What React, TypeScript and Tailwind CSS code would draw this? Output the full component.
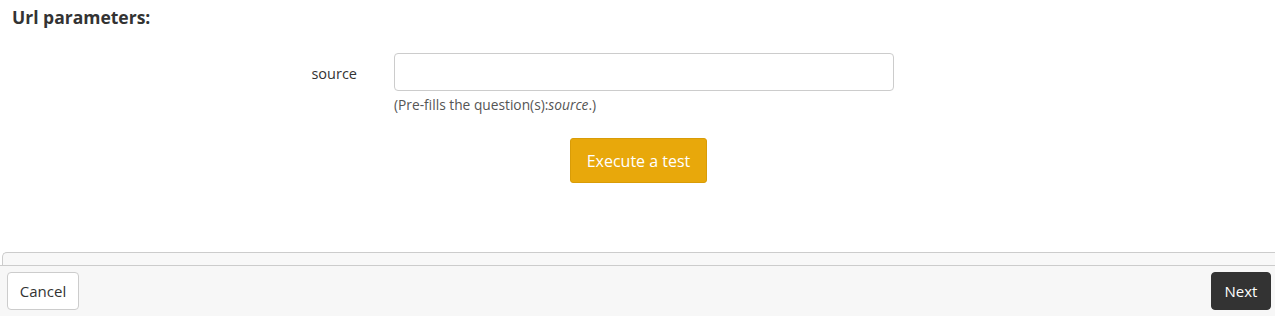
export default function App() {
    return (
        <div className="w-[1275px] h-[316px] bg-white flex flex-col text-[#333] font-['Open_Sans',sans-serif] overflow-hidden">
            <div className="flex-1 flex flex-col">
                <h3 className="px-3 pt-[5px] text-[17.5px] font-bold leading-[24px]">Url parameters:</h3>

                <div className="flex mt-[24px]">
                    <label className="w-[357px] text-right text-[14.5px] pt-[11px] leading-[20px]">source</label>
                    <div className="ml-[37px]">
                        <input
                            type="text"
                            className="block w-[500px] h-[38px] border border-[#ccc] rounded-[4px] px-3 outline-none"
                        />
                        <p className="mt-[4px] text-[13.75px] leading-[20px] text-[#555]">
                            (Pre-fills the question(s):<em>source</em>.)
                        </p>
                    </div>
                </div>

                <div className="flex justify-center mt-[23px] pl-[2px]">
                    <button className="w-[137px] h-[45px] rounded-[3px] bg-[#e8a80b] border border-[#d99c07] text-white text-[16px]">
                        Execute a test
                    </button>
                </div>
            </div>

            <div className="h-[13px] ml-[2px] bg-[#f8f8f8] border-t border-l border-[#ccc] rounded-tl-[5px]" />
            <div className="h-[51px] bg-[#f7f7f7] border-t border-[#ccc] flex items-center justify-between pl-[7px] pr-[4px]">
                <button className="w-[72px] h-[38px] bg-white border border-[#ccc] rounded-[4px] text-[15px] text-[#333]">
                    Cancel
                </button>
                <button className="w-[60px] h-[38px] bg-[#333] border border-[#333] rounded-[4px] text-[15px] text-white">
                    Next
                </button>
            </div>
        </div>
    );
}
